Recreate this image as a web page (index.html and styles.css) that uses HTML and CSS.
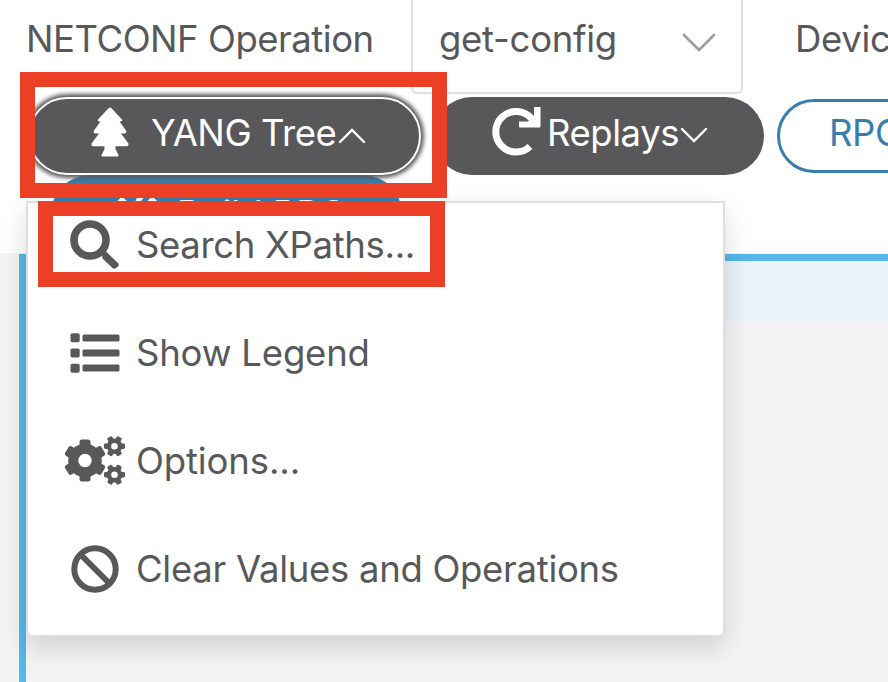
FILE: index.html
```html
<!DOCTYPE html>
<html lang="en">
<head>
<meta charset="utf-8">
<title>YANG Tree</title>
<link rel="stylesheet" href="styles.css">
</head>
<body>
<header class="toolbar">
  <div class="fields">
    <span class="label operation">NETCONF Operation</span>
    <div class="select"><span>get-config</span>
      <svg class="select-arrow" width="36" height="22" viewBox="0 0 36 22"><path d="M3 3 18 18 33 3"/></svg>
    </div>
    <span class="label device">Device</span>
  </div>
  <div class="buttons">
    <button class="btn dark focused">
      <svg class="tree" width="38" height="50" viewBox="0 0 38 50"><path d="M17.500 1.200q1.500-1.600 3 0L31 12.500q.8 1.500-1.500 2H28.500L35 23.500q1 2-1 3H30L37.300 36.200q.8 2.600-1.400 3H24.500V42L27.500 48q0 1.500-1 1.500H11.500q-1 0-1-1.500L13.500 42V39.200H2.100Q-.1 38.800.7 36.200L8 26.500H4q-2-1-1-3L9.500 14.500H8.500q-2.300-.5-1.500-2z"/></svg>
      <span>YANG Tree</span>
      <svg class="caret" width="28" height="17" viewBox="0 0 28 17"><path d="M2 15 14 3 26 15"/></svg>
    </button>
    <button class="btn dark replays">
      <svg class="redo" width="49" height="50" viewBox="0 0 49 50"><path class="arc" d="M39.500 12.500A20.300 20.300 0 1 0 38 40.500"/><path class="head" d="M48.500 1V20.500q0 1-1 1H28q-1 0-1-1V15.500H36L42 9.500V1z"/></svg>
      <span>Replays</span>
      <svg class="caret" width="28" height="17" viewBox="0 0 28 17"><path d="M2 2 14 14 26 2"/></svg>
    </button>
    <button class="btn outline"><span>RPC</span></button>
  </div>
  <button class="btn build">
    <svg width="48" height="46" viewBox="0 0 48 46"><path d="M0 13 8 5.500 16 13 12 42H4zM20 13 24 5H31L25 13V42H20zM30 13 38 5.500 47 13 42 42H34z"/></svg>
    <span>Build RPC</span>
  </button>
</header>
<main class="workspace"><section class="panel"><div class="stripe"></div></section></main>

<nav class="menu">
  <a class="item search"><span class="icon"><svg width="50" height="50" viewBox="0 0 50 50"><circle cx="20" cy="20" r="16" fill="none" stroke="#58585b" stroke-width="7.600"/><path d="M32 35 36 31.500 48 43Q49.600 44.600 48 46.500L46 48Q44 49.500 42.500 48L32.500 38.500z"/></svg></span><span>Search XPaths...</span></a>
  <a class="item legend"><span class="icon"><svg width="50" height="40" viewBox="0 0 50 40"><rect x=".5" y=".3" width="9.200" height="9" rx="1.800"/><rect x=".5" y="15.500" width="9.200" height="9" rx="1.800"/><rect x=".5" y="30.700" width="9.200" height="9" rx="1.800"/><rect x="12.500" y="1.400" width="37" height="7" rx="1.500"/><rect x="12.500" y="16.500" width="37" height="7" rx="1.500"/><rect x="12.500" y="31.600" width="37" height="7" rx="1.500"/></svg></span><span>Show Legend</span></a>
  <a class="item options"><span class="icon"><svg width="62" height="50" viewBox="0 0 62 50">
    <defs><g id="teeth"><rect x="-5.500" y="-21" width="11" height="42" rx="2.500"/></g><g id="small"><rect x="-2.800" y="-10.500" width="5.600" height="21" rx="1.400"/></g></defs>
    <g transform="translate(21 24.500)"><use href="#teeth"/><use href="#teeth" transform="rotate(60)"/><use href="#teeth" transform="rotate(120)"/><circle r="16.800"/><circle r="6.700" fill="#fff"/></g>
    <g transform="translate(50.500 10.200)"><use href="#small" transform="rotate(30)"/><use href="#small" transform="rotate(90)"/><use href="#small" transform="rotate(150)"/><circle r="7.800"/><circle r="3.300" fill="#fff"/></g>
    <g transform="translate(50.500 38.700)"><use href="#small" transform="rotate(30)"/><use href="#small" transform="rotate(90)"/><use href="#small" transform="rotate(150)"/><circle r="7.800"/><circle r="3.300" fill="#fff"/></g>
  </svg></span><span>Options...</span></a>
  <a class="item clear"><span class="icon"><svg width="48" height="48" viewBox="0 0 48 48"><g fill="none" stroke="#58585b" stroke-width="6"><circle cx="24" cy="24" r="20.700"/><path d="M9.500 9.500 38.500 38.500"/></g></svg></span><span>Clear Values and Operations</span></a>
</nav>
<div class="highlight highlight-button"></div>
<div class="highlight highlight-item"></div>
</body>
</html>
```
FILE: styles.css
```css
* { box-sizing: border-box; }
body {
  margin: 0;
  width: 888px;
  height: 682px;
  overflow: hidden;
  position: relative;
  background: #f4f4f4;
  color: #58585b;
  font: 400 36.500px/44px Inter, sans-serif;
}
svg { display: block; flex: none; }
.toolbar { height: 253px; background: #fff; overflow: hidden; }
.fields { display: flex; height: 94px; white-space: nowrap; }
.label { padding-top: 17px; flex: none; }
.operation { width: 411px; padding-left: 26px; letter-spacing: -.48px; }
.device { padding-left: 52px; letter-spacing: -.3px; }
.select {
  flex: none;
  display: flex;
  justify-content: space-between;
  width: 332px;
  padding: 17px 24px 0 26px;
  border: 2px solid #dfdfdf;
  border-top: 0;
  border-radius: 0 0 6px 6px;
  letter-spacing: -.28px;
}
.select-arrow { margin-top: 15px; fill: none; stroke: #9e9ea2; stroke-width: 2.700; stroke-linecap: round; }
.buttons { display: flex; align-items: center; margin-top: 3px; padding-left: 28px; height: 78px; }
.btn {
  flex: none;
  display: flex;
  align-items: center;
  height: 78px;
  padding: 0;
  border: 0;
  border-radius: 39px;
  font: inherit;
  letter-spacing: -.45px;
  color: #fff;
  white-space: nowrap;
}
.dark { background: #58585b; }
.focused { width: 393px; padding-left: 61px; border: 2px solid #fff; box-shadow: 0 0 4px 3px #58585b; position: relative; z-index: 1; }
.tree { margin: -9px 22px 0 0; fill: #fff; }
.btn span { margin-top: -7px; }
.caret { margin: -2px 0 0 1px; fill: none; stroke: #fff; stroke-width: 2.400; stroke-linecap: round; }
.focused .caret { margin-left: 2px; }
.replays { width: 331px; margin-left: 12px; padding-left: 59px; }
.redo { margin: -11px 6px 0 0; fill: #fff; }
.redo .arc { fill: none; stroke: #fff; stroke-width: 7; }
.outline { width: 200px; height: 74px; margin-left: 13px; padding-left: 49px; border: 3px solid #377dad; background: #fff; color: #377dad; }
.build { width: 351px; margin-left: 51px; padding-left: 63px; background: #377dad; gap: 15px; letter-spacing: 0; }
.btn.build span { margin-top: -1px; }
.build svg { fill: #fff; }
.workspace { padding: 1px 0 0 19px; height: 429px; }
.panel { height: 428px; border-top: 7px solid #54b8e8; border-left: 7px solid #54b8e8; }
.stripe { height: 60px; background: #eaf2fc; }
.menu {
  position: absolute;
  left: 26px;
  top: 201px;
  width: 699px;
  height: 435px;
  padding-left: 34px;
  background: #fff;
  border: 2px solid #dfdfdf;
  border-bottom-width: 1px;
  border-radius: 0 0 6px 6px;
  box-shadow: 0 12px 28px rgba(0, 0, 0, .15);
}
.item { display: flex; align-items: center; height: 108px; padding-bottom: 24px; white-space: nowrap; }
.icon { width: 65px; display: flex; justify-content: center; margin: -1px 9px 0 0; fill: #58585b; }
.search { letter-spacing: -.34px; }
.legend { letter-spacing: -.2px; }
.options { letter-spacing: -.12px; }
.clear { letter-spacing: -.29px; }
.highlight { position: absolute; border: 15px solid #eb4026; z-index: 2; }
.highlight-button { left: 19.500px; top: 72px; width: 427px; height: 126px; }
.highlight-item { left: 37.500px; top: 201px; width: 407px; height: 86px; }
```
